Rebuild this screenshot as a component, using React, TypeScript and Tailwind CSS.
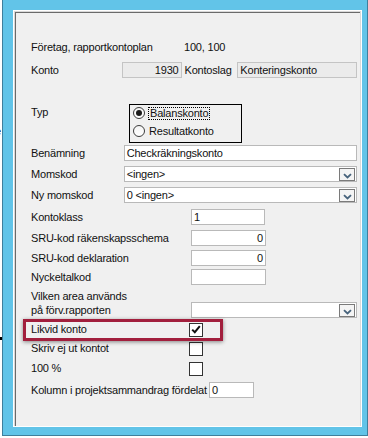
import React from "react";

function Box({ w, value, align = "left", ro = false }: { w: number; value?: string; align?: "left" | "right"; ro?: boolean }) {
  return (
    <div
      style={{ width: w }}
      className={`h-[16px] border flex items-center px-[2px] leading-none ${ro ? "bg-[#ebebeb] border-[#c4c4c4]" : "bg-white border-[#b9b9b9]"} ${align === "right" ? "justify-end" : "justify-start"}`}
    >
      <span className="whitespace-nowrap">{value}</span>
    </div>
  );
}

function Combo({ w, value }: { w: number; value?: string }) {
  return (
    <div style={{ width: w }} className="h-[16px] border border-[#b9b9b9] bg-white flex items-center pl-[2px] pr-[1px] relative">
      <span className="whitespace-nowrap flex-1">{value}</span>
      <div className="w-[16px] h-[13px] mt-[1px] border border-[#7a7a7a] bg-[#f4f4f4] flex items-center justify-center">
        <svg width="9" height="6" viewBox="0 0 9 6" className="mt-[2px]">
          <path d="M1 1.2 L4.5 4.5 L8 1.2" fill="none" stroke="#47637c" strokeWidth="1.8" />
        </svg>
      </div>
    </div>
  );
}

function Check({ checked = false }: { checked?: boolean }) {
  return (
    <div className="w-[14px] h-[14px] border border-[#333333] bg-white flex items-center justify-center">
      {checked && (
        <svg width="10" height="9" viewBox="0 0 10 9">
          <path d="M1.2 4.6 L3.8 7.2 L8.8 1.2" fill="none" stroke="#111" strokeWidth="2" />
        </svg>
      )}
    </div>
  );
}

function Radio({ checked = false }: { checked?: boolean }) {
  return (
    <div className="w-[12px] h-[12px] rounded-full border border-[#3c3c3c] bg-gradient-to-b from-[#f4f4f4] to-white flex items-center justify-center">
      {checked && <div className="w-[6px] h-[6px] rounded-full bg-[#1a1a1a]" />}
    </div>
  );
}

export default function App() {
  return (
    <div className="w-[368px] h-[438px] bg-white relative overflow-hidden font-['Liberation_Sans',Arial,sans-serif] text-[11px] tracking-[-0.2px] text-[#111]">
      <span className="absolute left-[-5px] top-[126px] text-[11px] leading-none">e</span>
      <div className="absolute left-0 top-[337px] w-[2px] h-[3px] bg-black" />
      <div className="ml-[2px] w-[366px] h-[436px] border-l border-r border-b border-[#3f7f9c] bg-[#62c4e8] pt-[10px] pl-[10px] pr-[5px] pb-[7px]">
        <div className="border border-white">
          <div className="pl-[1px] pt-[1px] bg-[#d9d9d9]">
            <div className="border-l border-t border-[#6a6a6a] bg-[#f0f0f0] h-[414px] w-[345px] pl-[15px] pr-[3px] flex flex-col">
              <div className="mt-[26px] h-[16px] flex items-center">
                <span className="w-[153px]">Företag, rapportkontoplan</span>
                <span>100, 100</span>
              </div>
              <div className="mt-[7px] h-[16px] flex items-center">
                <span className="w-[91px]">Konto</span>
                <Box w={60} value="1930" align="right" ro />
                <span className="ml-[3px] w-[53px]">Kontoslag</span>
                <Box w={120} value="Konteringskonto" ro />
              </div>
              <div className="mt-[26px] flex items-start">
                <span className="w-[98px] h-[16px] flex items-center">Typ</span>
                <div className="w-[113px] h-[39px] border border-black pl-[3px] flex flex-col">
                  <div className="h-[16px] flex items-center">
                    <Radio checked />
                    <span className="ml-[3px] border border-dotted border-black px-[1px] leading-[11px]">Balanskonto</span>
                  </div>
                  <div className="mt-[2px] h-[16px] flex items-center">
                    <Radio />
                    <span className="ml-[4px]">Resultatkonto</span>
                  </div>
                </div>
              </div>
              <div className="mt-[2px] h-[16px] flex items-center">
                <span className="w-[93px]">Benämning</span>
                <Box w={234} value="Checkräkningskonto" />
              </div>
              <div className="mt-[5px] h-[16px] flex items-center">
                <span className="w-[93px]">Momskod</span>
                <Combo w={234} value="<ingen>" />
              </div>
              <div className="mt-[5px] h-[16px] flex items-center">
                <span className="w-[93px]">Ny momskod</span>
                <Combo w={234} value="0 <ingen>" />
              </div>
              <div className="mt-[6px] h-[16px] flex items-center">
                <span className="w-[160px]">Kontoklass</span>
                <Box w={74} value="1" />
              </div>
              <div className="mt-[5px] h-[16px] flex items-center">
                <span className="w-[160px]">SRU-kod räkenskapsschema</span>
                <Box w={75} value="0" align="right" />
              </div>
              <div className="mt-[4px] h-[16px] flex items-center">
                <span className="w-[160px]">SRU-kod deklaration</span>
                <Box w={75} value="0" align="right" />
              </div>
              <div className="mt-[3px] h-[16px] flex items-center">
                <span className="w-[160px]">Nyckeltalkod</span>
                <Box w={75} />
              </div>
              <div className="mt-[4px] h-[29px] flex items-end">
                <span className="w-[160px] leading-[14px] self-start">
                  Vilken area används
                  <br />
                  på förv.rapporten
                </span>
                <Combo w={167} />
              </div>
              <div className="mt-[5px] h-[13px] flex items-center relative">
                <div className="absolute left-[-8px] top-[-4px] w-[200px] h-[22px] border-[3px] border-[#a21f3d] shadow-[0_1px_4px_rgba(0,0,0,0.45)]" />
                <span className="w-[158px]">Likvid konto</span>
                <Check checked />
              </div>
              <div className="mt-[6px] h-[13px] flex items-center">
                <span className="w-[158px]">Skriv ej ut kontot</span>
                <Check />
              </div>
              <div className="mt-[7px] h-[13px] flex items-center">
                <span className="w-[158px]">100 %</span>
                <Check />
              </div>
              <div className="mt-[7px] h-[16px] flex items-center">
                <span className="w-[178px]">Kolumn i projektsammandrag fördelat</span>
                <Box w={45} value="0" />
              </div>
            </div>
          </div>
        </div>
      </div>
    </div>
  );
}
